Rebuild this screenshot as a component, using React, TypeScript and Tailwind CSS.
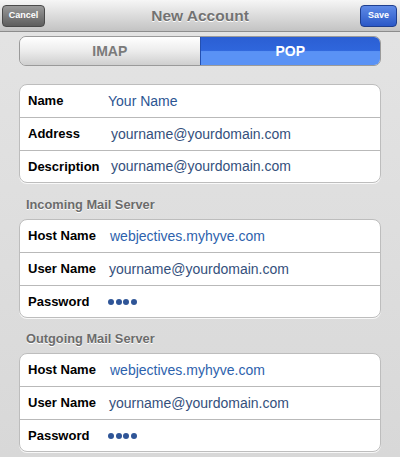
import React from "react";

const font = { fontFamily: '"Liberation Sans", Arial, sans-serif' };

function Dots() {
  return (
    <div className="flex gap-[1.5px] items-center">
      {[0, 1, 2, 3].map((i) => (
        <span key={i} className="block w-[6px] h-[6px] rounded-full bg-[#2f5597]" />
      ))}
    </div>
  );
}

type Row = { label: string; value?: string; dots?: boolean; color?: string; pad?: string };

function Group({ rows }: { rows: Row[] }) {
  return (
    <div className="mx-[19px] bg-white rounded-[8px] border border-[#bdbdbd] shadow-[0_1px_0_rgba(255,255,255,0.8)] overflow-hidden">
      {rows.map((r, i) => (
        <div
          key={r.label}
          className={`flex items-center pl-[8px] ${i === 0 ? "h-[32px]" : i === rows.length - 1 ? "h-[32px] border-t border-[#b9b9b9]" : "h-[33px] border-t border-[#b9b9b9]"}`}
        >
          <div className="w-[80px] shrink-0 text-[13px] font-bold text-black">{r.label}</div>
          {r.dots ? (
            <Dots />
          ) : (
            <div className={`text-[14px] ${r.pad ?? "pl-[3px]"} ${r.color ?? "text-[#34507c]"}`}>{r.value}</div>
          )}
        </div>
      ))}
    </div>
  );
}

export default function App() {
  return (
    <div
      className="w-[400px] h-[457px] overflow-hidden bg-gradient-to-b from-[#e4e4e4] via-[#dedede] to-[#d8d8d8]"
      style={font}
    >
      {/* Header */}
      <div className="relative h-[32px] bg-gradient-to-b from-[#f6f6f6] to-[#c3c3c3] border-b border-[#8d8d8d] flex items-center justify-center">
        <button className="absolute left-[2px] top-[5px] w-[43px] h-[22px] rounded-[4px] border border-[#4a4a4a] bg-gradient-to-b from-[#9a9a9a] to-[#5e5e5e] text-white text-[9px] font-bold">
          Cancel
        </button>
        <div className="text-[15.5px] font-bold text-[#727272] [text-shadow:0_1px_0_#fff]">New Account</div>
        <button className="absolute right-[3px] top-[5px] w-[37px] h-[22px] rounded-[4px] border border-[#1f3f8f] bg-gradient-to-b from-[#5f8ae6] to-[#2b58c7] text-white text-[9px] font-bold">
          Save
        </button>
      </div>

      {/* Segmented control */}
      <div className="mx-[19px] mt-[4px] h-[30px] flex rounded-[7px] border border-[#9a9a9a] overflow-hidden">
        <div className="flex-1 flex items-center justify-center bg-gradient-to-b from-[#ffffff] via-[#ececec] to-[#cfcfcf] text-[14px] font-bold text-[#7a7a7a]">
          IMAP
        </div>
        <div className="flex-1 flex items-center justify-center bg-[linear-gradient(to_bottom,#2b5fd3_0%,#2f66dc_48%,#5a92f5_52%,#5a92f5_100%)] text-[14px] font-bold text-white border-l border-[#2450b0]">
          POP
        </div>
      </div>

      <div className="mt-[18px]">
        <Group
          rows={[
            { label: "Name", value: "Your Name", pad: "pl-0", color: "text-[#2b5592]" },
            { label: "Address", value: "yourname@yourdomain.com" },
            { label: "Description", value: "yourname@yourdomain.com" },
          ]}
        />
      </div>

      <div className="pt-[14px] pb-[6px] pl-[26px] h-[36px] text-[12.8px] leading-[16px] font-bold text-[#6b6b6b] [text-shadow:0_1px_0_#fff]">
        Incoming Mail Server
      </div>
      <Group
        rows={[
          { label: "Host Name", value: "webjectives.myhyve.com", color: "text-[#2d62ad]", pad: "pl-[2px]" },
          { label: "User Name", value: "yourname@yourdomain.com", pad: "pl-[1px]" },
          { label: "Password", dots: true },
        ]}
      />

      <div className="pt-[13px] pb-[6px] pl-[26px] h-[35px] text-[12.8px] leading-[16px] font-bold text-[#6b6b6b] [text-shadow:0_1px_0_#fff]">
        Outgoing Mail Server
      </div>
      <Group
        rows={[
          { label: "Host Name", value: "webjectives.myhyve.com", color: "text-[#2d62ad]", pad: "pl-[2px]" },
          { label: "User Name", value: "yourname@yourdomain.com", pad: "pl-[1px]" },
          { label: "Password", dots: true },
        ]}
      />
    </div>
  );
}
